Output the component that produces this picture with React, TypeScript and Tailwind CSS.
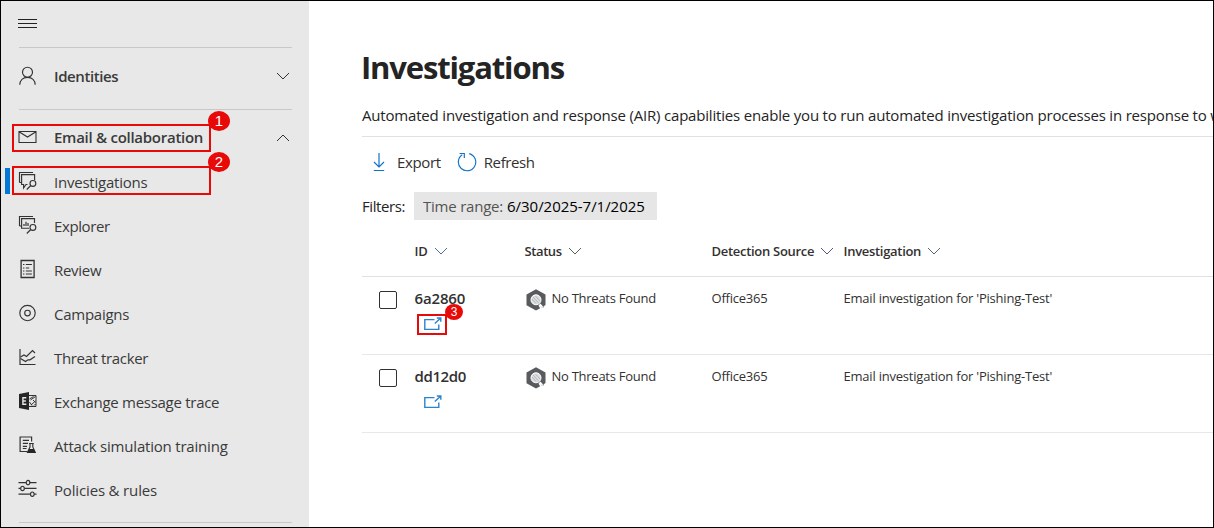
import type { ReactNode } from "react";

function Icon({ children }: { children: ReactNode }) {
  return (
    <svg viewBox="0 0 20 20" fill="none" stroke="#333333" strokeWidth="1.15" className="mb-0.5 size-5 shrink-0">
      {children}
    </svg>
  );
}

const PersonIcon = () => (
  <svg viewBox="0 0 20 20" fill="none" stroke="#333333" strokeWidth="1.15" className="size-5 shrink-0">
    <circle cx="9.5" cy="6.2" r="5" />
    <path d="M1.8 18.8 C2 14.5 4.8 11.4 9.5 11.4 S17 14.5 17.2 18.8" />
  </svg>
);

const MailIcon = () => (
  <svg viewBox="0 0 20 20" fill="none" stroke="#333333" strokeWidth="1.1" className="size-5 shrink-0">
    <path d="M1 3.5 H18 V14.5 H1 Z M1 3.7 L9.5 9 L18 3.7" />
  </svg>
);

const InvestigationsIcon = () => (
  <Icon>
    <path d="M1.5 11.5 V1.5 H15 M1.5 11.5 H3.5" />
    <path d="M9.5 13.5 H8 L5.6 17 V13.5 H3.6 V3.6 H16.6 V9" />
    <circle cx="14.9" cy="12.4" r="2.9" />
    <path d="M12.8 14.5 L8.8 18.5" />
  </Icon>
);

const ExplorerIcon = () => (
  <Icon>
    <path d="M15 1.5 H1.5 V11 M1.5 11 H3.5" />
    <path d="M16.5 8 V3.6 H3.6 V13.2 H11" />
    <path d="M6 11 V9 M8 11 V6.8 M10 11 V8" strokeWidth="1.2" />
    <circle cx="14.9" cy="12.4" r="2.9" />
    <path d="M12.8 14.5 L8.8 18.5" />
  </Icon>
);

const ReviewIcon = () => (
  <Icon>
    <path d="M3.1 1.5 H16.1 V18.5 H3.1 Z" strokeWidth="1.3" />
    <path d="M5 5.5 H6.4 M7.8 5.5 H13.9 M5 9 H6.4 M7.8 9 H11.2 M5 12 H6.4 M7.8 12 H13.9 M5 15 H6.4 M7.8 15 H13.9" />
  </Icon>
);

const CampaignsIcon = () => (
  <Icon>
    <circle cx="9.5" cy="10" r="7.7" />
    <circle cx="9.5" cy="10" r="2.8" />
  </Icon>
);

const ThreatIcon = () => (
  <Icon>
    <path d="M2 2 V17.5 H17.5" />
    <path d="M2.5 10 L6 8 L8.5 9.5 L14.5 3.5 L17 6" />
    <path d="M2.5 11.5 L7.5 14.5 L10 12.8 L12 12.8 L17 9.5" />
  </Icon>
);

const ExchangeIcon = () => (
  <Icon>
    <path d="M1 3 L11 1 V19 L1 17 Z" fill="#262626" stroke="none" />
    <path d="M8.3 6.7 H4.9 V13.3 H8.3 M4.9 10 H7.9" stroke="#e8e8e8" strokeWidth="1.4" />
    <path d="M11 4.5 H18 V15.5 H11" strokeWidth="1" />
    <path d="M11.5 8 L15.5 5.5 M12.5 9 L17.5 5.5 M13 14 L17.5 10 M15 9 L17.5 11.5 M11.5 11 L14 14.5 M16 14.5 L17.5 13" strokeWidth="1" />
  </Icon>
);

const AttackIcon = () => (
  <Icon>
    <path d="M9.5 16.5 H2.1 V2 H13.6 V6.5" strokeWidth="1.2" />
    <path d="M4.8 5.3 H11 M4.8 8.3 H10 M4.8 11.3 H9 M4.8 13.5 H8.5" />
    <path d="M11 8.5 H15.8 M12 8.5 V12 L9.5 17.3 H17.2 L14.8 12 V8.5" />
    <path d="M11 14 H15.8 L17.8 17.9 H9 Z" fill="#262626" stroke="none" />
  </Icon>
);

const PoliciesIcon = () => (
  <Icon>
    <path d="M.5 3.6 H8 M12 3.6 H18.5 M.5 9.4 H2.6 M6.4 9.4 H18.5 M.5 15.2 H12.5 M16.2 15.2 H18.5" strokeWidth="1.3" />
    <ellipse cx="10" cy="3.6" rx="1.8" ry="2.2" />
    <ellipse cx="4.5" cy="9.4" rx="1.8" ry="2.2" />
    <ellipse cx="14.3" cy="15.2" rx="1.8" ry="2.2" />
  </Icon>
);

function Chevron({ up = false, color = "#333333" }: { up?: boolean; color?: string }) {
  return (
    <svg viewBox="0 0 14 8" fill="none" stroke={color} strokeWidth="1" className="h-2 w-3.5 shrink-0">
      <path d={up ? "M1 7 L7 1 L13 7" : "M1 1 L7 7 L13 1"} />
    </svg>
  );
}

const navItems = [
  { label: "Investigations", icon: <InvestigationsIcon />, tracking: "tracking-[-0.22px]" },
  { label: "Explorer", icon: <ExplorerIcon />, tracking: "tracking-[-0.4px]" },
  { label: "Review", icon: <ReviewIcon />, tracking: "tracking-[-0.3px]" },
  { label: "Campaigns", icon: <CampaignsIcon />, tracking: "tracking-[-0.26px]" },
  { label: "Threat tracker", icon: <ThreatIcon />, tracking: "tracking-[-0.36px]" },
  { label: "Exchange message trace", icon: <ExchangeIcon />, tracking: "tracking-[-0.28px]" },
  { label: "Attack simulation training", icon: <AttackIcon />, tracking: "tracking-[-0.2px]" },
  { label: "Policies & rules", icon: <PoliciesIcon />, tracking: "tracking-[-0.16px]" },
];

const columns = [
  { label: "ID", width: "w-[110px]", style: "tracking-[-0.2px] gap-[6px]", color: "#4f6f95" },
  { label: "Status", width: "w-[187px]", style: "tracking-[-0.4px] gap-[6px]", color: "#56684f" },
  { label: "Detection Source", width: "w-[132px]", style: "tracking-[-0.29px] gap-[6px]", color: "#55567c" },
  { label: "Investigation", width: "w-[200px]", style: "tracking-[-0.3px] gap-[6px]", color: "#52697c" },
];

const rows = [
  { id: "6a2860", tracking: "tracking-[-0.15px]" },
  { id: "dd12d0", tracking: "tracking-[-0.4px]" },
];

function StatusIcon() {
  return (
    <svg viewBox="0 0 20 22" className="mt-3 ml-px h-[22px] w-5 shrink-0">
      <path d="M10 .2 L19.5 5.5 V16 L17.3 17.4 L14 15 L12.5 16.7 L14.2 19.3 L10 21.6 L.5 16.2 V5.5 Z" fill="#585b5d" />
      <path d="M15 17.3 L17.5 18" stroke="#585b5d" strokeWidth="1.6" />
      <circle cx="10" cy="10.8" r="5" fill="#dcdedf" stroke="#ffffff" strokeWidth="1" />
      <path d="M6 10 L10 14.5 M7 8 L13 14.5 M9.5 7 L14 12" stroke="#a0a4a7" strokeWidth=".7" />
      <path d="M14 15 L16.7 18.5" stroke="#ffffff" strokeWidth="1.3" />
    </svg>
  );
}

function OpenIcon() {
  return (
    <svg viewBox="0 0 18 14" fill="none" stroke="#2b83cc" strokeWidth="1.4" className="mt-[9px] ml-[9px] h-3.5 w-[18px]">
      <path d="M10.5 2.6 H.8 V12.4 H14.8 V7.5" />
      <path d="M10.8 6.5 L16.5 1.2 M12.8 1 H16.8 V4.8" />
    </svg>
  );
}

export default function App() {
  return (
    <div className="relative flex h-[528px] w-[1214px] overflow-hidden border border-black bg-white font-['Open_Sans','Noto_Sans',sans-serif] text-[15px] text-[#323130]">
      <aside className="w-[308px] shrink-0 bg-[#e8e8e8] pr-[17px] pl-[17px] text-[#3a3a3a]">
        <div className="flex h-[46px] flex-col gap-[3px] pt-[18px]">
          <span className="h-px w-[19px] bg-[#222222]" />
          <span className="h-px w-[19px] bg-[#222222]" />
          <span className="h-px w-[19px] bg-[#222222]" />
        </div>
        <div className="ml-px h-px bg-[#c8c8c8]" />
        <div className="flex h-[61px] items-center gap-4 pr-0.5 pb-[5px]">
          <PersonIcon />
          <span className="flex-1 font-semibold tracking-[-0.42px]">Identities</span>
          <Chevron />
        </div>
        <div className="ml-px h-px bg-[#c8c8c8]" />
        <div className="flex h-[50px] items-center gap-4 pt-[5px] pr-0.5">
          <MailIcon />
          <span className="flex-1 font-semibold tracking-[-0.27px]">Email &amp; collaboration</span>
          <Chevron up />
        </div>
        <nav>
          {navItems.map((item) => (
            <div key={item.label} className="flex h-11 items-center gap-4 whitespace-nowrap">
              {item.icon}
              <span className={item.tracking}>{item.label}</span>
            </div>
          ))}
        </nav>
        <div className="mt-[10px] ml-px h-px bg-[#c8c8c8]" />
      </aside>

      <main className="min-w-0 flex-1 overflow-hidden pl-[53px]">
        <h1 className="-ml-px pt-[46px] text-[31px] leading-10 font-bold tracking-[-1.15px] text-[#242424]">Investigations</h1>
        <p className="mt-[18px] h-[31px] text-[15px] leading-[21px] tracking-[-0.184px] whitespace-nowrap text-[#242424]">
          Automated investigation and response (AIR) capabilities enable you to run automated investigation processes in response to w
        </p>
        <div className="h-px bg-[#e1e1e1]" />

        <div className="flex h-[50px] items-center pt-px pl-2.5">
          <svg viewBox="0 0 14 20" fill="none" stroke="#1173c6" strokeWidth="1.2" className="mb-0.5 h-5 w-3.5">
            <path d="M7 1 V15 M2 10 L7 15 L12 10 M1.8 18.5 H12.2" />
          </svg>
          <span className="ml-[11px] tracking-[-0.35px]">Export</span>
          <svg viewBox="0 0 20 20" fill="none" stroke="#1173c6" strokeWidth="1.15" className="mb-0.5 ml-4 size-5">
            <path d="M12.2 1.6 A8.7 8.7 0 1 1 5.2 2.8" />
            <path d="M2.6 1.5 H7.3 V6" />
          </svg>
          <span className="ml-[7px] tracking-[-0.4px]">Refresh</span>
        </div>

        <div className="flex h-[36px] items-center pt-0.5">
          <span className="w-[52px] tracking-[-0.4px] text-[#242424]">Filters:</span>
          <div className="flex h-7 w-[243px] items-center gap-1 bg-[#e6e6e6] pl-[9px] whitespace-nowrap">
            <span className="tracking-[-0.22px] text-[#555453]">Time range:</span>
            <span className="tracking-[-0.03px] text-black">6/30/2025-7/1/2025</span>
          </div>
        </div>

        <div className="mt-[3px] flex h-[51px] items-center border-b border-[#e1e1e1] pl-[52.5px] text-[13px] font-semibold whitespace-nowrap">
          {columns.map((column) => (
            <div key={column.label} className={`flex items-center ${column.width} ${column.style}`}>
              <span className="pt-0.5">{column.label}</span>
              <Chevron color={column.color} />
            </div>
          ))}
        </div>

        {rows.map((row) => (
          <div key={row.id} className="flex h-[78px] border-b border-[#e8e8e8] text-[13px] whitespace-nowrap">
            <div className="w-[52.5px] pt-3.5 pl-[17px]">
              <div className="size-[18px] rounded-[2px] border border-[#323130]" />
            </div>
            <div className="w-[110px] pt-[11px]">
              <div className={`text-[15px] leading-5 font-semibold ${row.tracking}`}>{row.id}</div>
              <OpenIcon />
            </div>
            <StatusIcon />
            <span className="w-[166px] pt-[11px] pl-1.5 leading-5 tracking-[-0.26px]">No Threats Found</span>
            <span className="w-[132px] pt-[11px] leading-5 tracking-[-0.22px]">Office365</span>
            <span className="pt-[11px] leading-5 tracking-[-0.21px]">Email investigation for 'Pishing-Test'</span>
          </div>
        ))}
      </main>

      <div className="absolute top-[167px] left-1 h-[26px] w-[5px] bg-[#0078d4]" />
      <div className="absolute top-[123px] left-[11px] h-7 w-[199px] border-2 border-[#e80909]" />
      <div className="absolute top-[165px] left-[11px] h-[29px] w-[199px] border-2 border-[#e80909]" />
      <div className="absolute top-[313px] left-[416px] h-[21px] w-[30px] border-2 border-[#e80909]" />
      <div className="absolute top-[110px] left-[207px] flex h-5 w-[22px] items-center justify-center rounded-[50%] bg-[#e80909] font-['Liberation_Sans',sans-serif] text-[15px] leading-5 text-white">1</div>
      <div className="absolute top-[151px] left-[207px] flex h-5 w-[22px] items-center justify-center rounded-[50%] bg-[#e80909] font-['Liberation_Sans',sans-serif] text-[15px] leading-5 text-white">2</div>
      <div className="absolute top-[303px] left-[444px] flex h-4 w-[18px] items-center justify-center rounded-[50%] bg-[#e80909] font-['Liberation_Sans',sans-serif] text-xs leading-4 text-white">3</div>
    </div>
  );
}
